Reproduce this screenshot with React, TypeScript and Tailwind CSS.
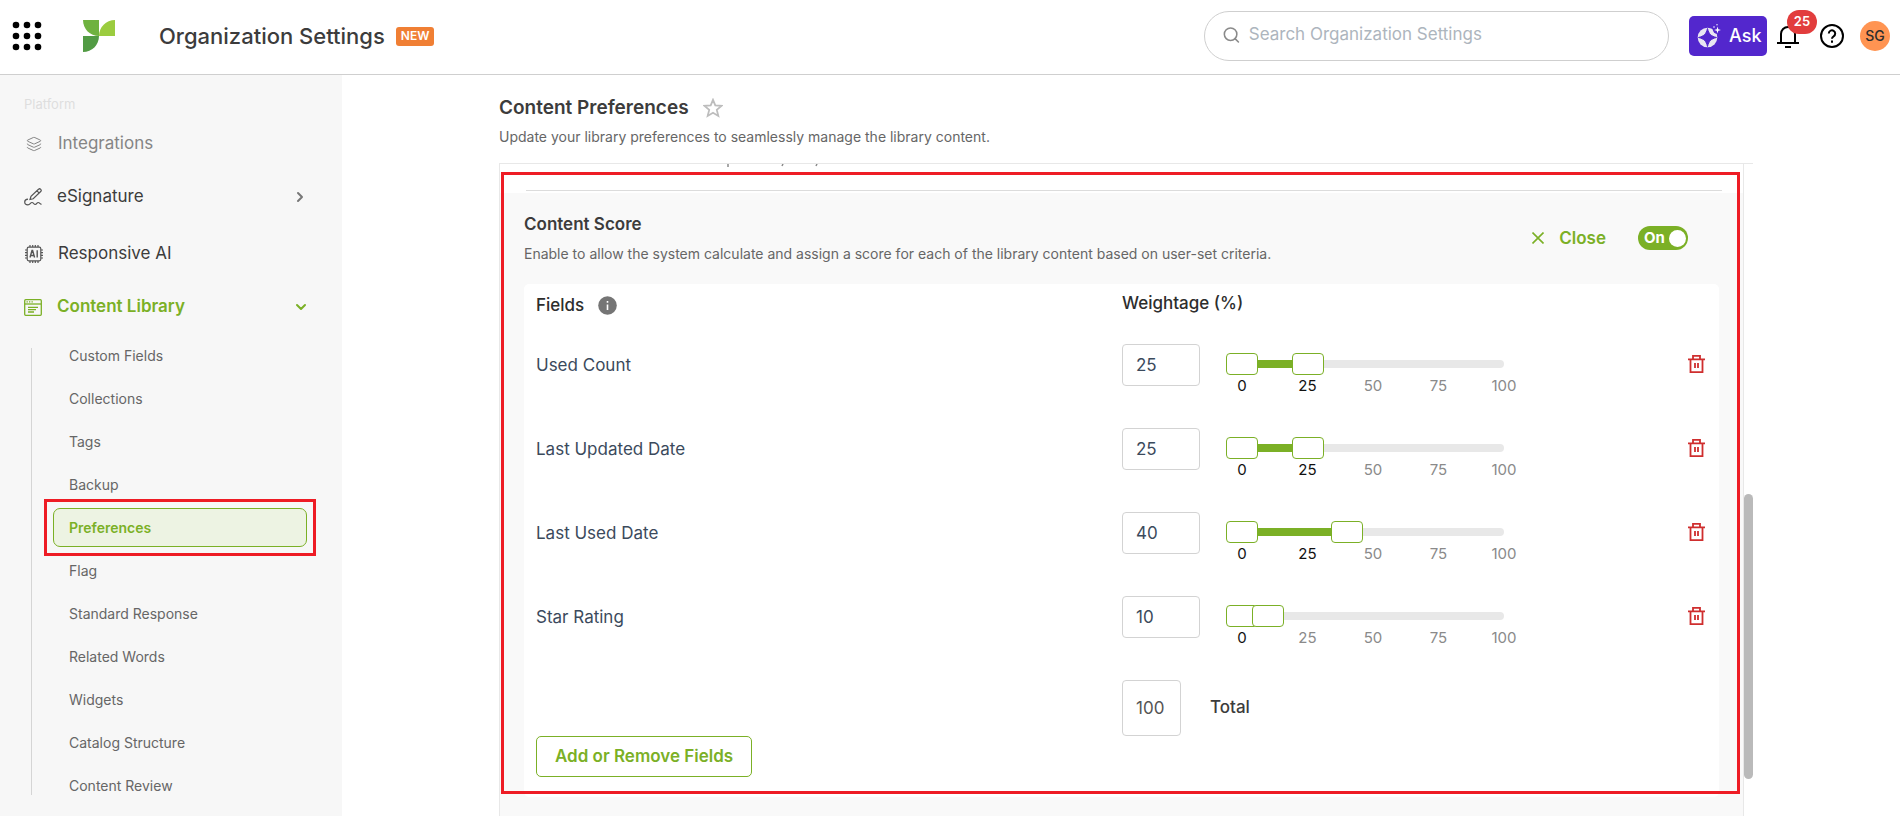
import { useState } from 'react';
import { Search, ChevronRight, ChevronDown, Layers } from 'lucide-react';

interface Field {
  id: string;
  label: string;
  weight: number;
}

const initialFields: Field[] = [
  { id: 'used-count', label: 'Used Count', weight: 25 },
  { id: 'last-updated', label: 'Last Updated Date', weight: 25 },
  { id: 'last-used', label: 'Last Used Date', weight: 40 },
  { id: 'star-rating', label: 'Star Rating', weight: 10 },
];

const libraryLinks = [
  'Custom Fields',
  'Collections',
  'Tags',
  'Backup',
  'Preferences',
  'Flag',
  'Standard Response',
  'Related Words',
  'Widgets',
  'Catalog Structure',
  'Content Review',
];

const ticks = [0, 25, 50, 75, 100];

function AppsIcon() {
  return (
    <svg width="30" height="30" viewBox="0 0 30 30" fill="#000">
      {[4, 15, 26].map((y) => [4, 15, 26].map((x) => <circle key={`${x}-${y}`} cx={x} cy={y} r="3.3" />))}
    </svg>
  );
}

function Logo() {
  return (
    <svg width="32" height="32" viewBox="0 0 32 32">
      <path d="M0 0h16v16C7 16 0 9 0 0z" fill="#6fb23f" />
      <path d="M32 0v16H16C16 7 23 0 32 0z" fill="#9bcc3f" />
      <path d="M0 16h16c0 9-7 16-16 16z" fill="#529b44" />
    </svg>
  );
}

function AskIcon() {
  return (
    <svg width="24" height="24" viewBox="0 0 24 24" fill="none">
      <circle cx="10.5" cy="13.5" r="9.8" fill="#e9e6f2" />
      <path
        d="M10.5 4.5c1.300 5.500 3.500 7.700 9 9-5.500 1.300-7.700 3.500-9 9-1.300-5.500-3.500-7.700-9-9 5.500-1.300 7.700-3.500 9-9z"
        fill="#5327cd"
        stroke="#5327cd"
      />
      <circle cx="20" cy="5.500" r="4.200" fill="#5327cd" />
      <path d="M20.500 2.500l.8 2.700 2.700.8-2.700.8-.8 2.700-.8-2.700L17 6l2.700-.8z" fill="#fff" />
      <circle cx="17" cy="3" r=".8" fill="#fff" />
      <circle cx="20" cy=".8" r=".7" fill="#fff" />
    </svg>
  );
}

function BellIcon() {
  return (
    <svg width="22" height="24" viewBox="0 0 22 24" fill="none" stroke="#000" strokeWidth="2">
      <path d="M0 19h22M4 19V10a7 7 0 0 1 14 0v9M8 23h6" />
    </svg>
  );
}

function HelpIcon() {
  return (
    <svg width="24" height="24" viewBox="0 0 24 24" fill="none" stroke="#000" strokeWidth="2">
      <circle cx="12" cy="12" r="11" />
      <path d="M8.800 9.500a3.200 3.200 0 1 1 4.800 2.800c-1 .6-1.600 1.200-1.600 2.400" />
      <path d="M12 16.500v2.200" />
    </svg>
  );
}

function SignIcon() {
  return (
    <svg width="18" height="18" viewBox="0 0 18 18" fill="none" stroke="#555" strokeWidth="1.200">
      <path d="M6 11.500l1-3.200 7.500-7a1.500 1.500 0 0 1 2.200 2.200L9.200 10.800zM13 2.800l2 2" />
      <path d="M4 11.200c-2 .2-3.300 1.200-3.300 2.800s1.500 2.800 3.300 2.800c2.200 0 2.200-2.300 4-2.300s1.500 2 3.200 2 1.500-2 3-2 1.600 1.600 3.300 1.900" />
    </svg>
  );
}

function ChipIcon() {
  return (
    <svg width="18" height="18" viewBox="0 0 18 18" fill="none" stroke="#555" strokeWidth="1.200">
      <rect x="2.200" y="2.200" width="13.600" height="13.600" rx="1.500" />
      <path d="M5 0v2M7.700 0v2M10.300 0v2M13 0v2M5 16v2M7.700 16v2M10.300 16v2M13 16v2M0 5h2M0 7.700h2M0 10.300h2M0 13h2M16 5h2M16 7.700h2M16 10.300h2M16 13h2" />
      <path d="M5 12.500l2-7h.6l2 7M5.700 10.500h3.200M12.200 5.300v7.200" strokeWidth="1.400" />
    </svg>
  );
}

function LibraryIcon() {
  return (
    <svg width="18" height="17" viewBox="0 0 18 17" fill="none" stroke="#7bb026" strokeWidth="1.300">
      <rect x=".7" y=".7" width="16.600" height="15.600" rx="1" />
      <path d="M1 5h16" />
      <path d="M2.500 2.900h1.300M5 2.900h1.300M7.500 2.900h1.300" />
      <path d="M4 8.300h10M4 10.700h8M4 13h6" />
    </svg>
  );
}

function StarIcon() {
  return (
    <svg width="20" height="20" viewBox="0 0 20 20" fill="none" stroke="#bdbdbd" strokeWidth="1.800">
      <path d="M10 1.800l2.300 5.600 6.200.5-4.700 4 1.500 6L10 14.700l-5.300 3.200 1.500-6-4.700-4 6.200-.5z" />
    </svg>
  );
}

function InfoIcon() {
  return (
    <svg width="19" height="19" viewBox="0 0 19 19">
      <circle cx="9.500" cy="9.500" r="9.300" fill="#757575" />
      <path d="M9.500 8.500v5.500M9.500 5v1.800" stroke="#fff" strokeWidth="1.600" />
    </svg>
  );
}

function CloseIcon() {
  return (
    <svg width="12" height="12" viewBox="0 0 12 12" fill="none" stroke="#7bb026" strokeWidth="1.600">
      <path d="M.5.5l11 11M11.500.5l-11 11" />
    </svg>
  );
}

function TrashIcon() {
  return (
    <svg width="17" height="18" viewBox="0 0 17 18" fill="none" stroke="#cf2e2e" strokeWidth="1.800">
      <path d="M0 4.300h17M5 4V.9h7V4M2.500 4.500v12.600h12V4.500M7 8v5M10 8v5" />
    </svg>
  );
}

function Header() {
  return (
    <header className="flex h-[75px] shrink-0 items-center border-b border-[#cfcfcf] bg-white pr-[10px] pb-[2px] pl-3">
      <button aria-label="Apps" className="mr-[41px]">
        <AppsIcon />
      </button>
      <a href="#home" aria-label="Home" className="mr-11">
        <Logo />
      </a>
      <h1 className="text-[22px] font-medium text-[#3c3c3c]">Organization Settings</h1>
      <span className="ml-[11px] flex h-[19px] items-center rounded-[3px] bg-[#f07f34] px-[5px] text-xs font-semibold text-white">
        NEW
      </span>
      <label className="ml-auto flex h-[50px] w-[465px] items-center gap-2 rounded-full border border-[#cfcfcf] px-[17px] pb-[3px]">
        <Search size={20} strokeWidth={2} className="text-[#8a8a8a]" />
        <input
          type="search"
          aria-label="Search Organization Settings"
          placeholder="Search Organization Settings"
          className="w-full bg-transparent text-[17px] outline-none placeholder:text-[#adb5bd]"
        />
      </label>
      <button className="ml-5 flex h-10 w-[78px] items-center gap-2 rounded-[5px] bg-[#5327cd] pl-2 text-lg font-medium text-white">
        <AskIcon />
        Ask
      </button>
      <button aria-label="Notifications" className="relative ml-[10px]">
        <BellIcon />
        <span className="absolute -top-[14px] left-[10px] flex h-6 w-[30px] items-center justify-center rounded-full bg-[#e23d3d] text-[13px] font-semibold text-white">
          25
        </span>
      </button>
      <button aria-label="Help" className="ml-[21px]">
        <HelpIcon />
      </button>
      <button className="ml-4 size-[30px] rounded-full bg-[#ff9452] text-sm font-medium text-[#2d2d2d]">SG</button>
    </header>
  );
}

function Sidebar() {
  return (
    <nav className="w-[342px] shrink-0 bg-[#f7f7f7] text-[17px] text-[#3c3c3c]">
      <p className="mt-[21px] pl-6 text-[13px] leading-4 text-[#dedede]">Platform</p>
      <a href="#integrations" className="mt-5 flex h-6 items-center pl-[26px] text-[#858585]">
        <Layers size={16} strokeWidth={1.500} className="mr-4" />
        Integrations
      </a>
      <a href="#esignature" className="mt-[29px] flex h-6 items-center pr-[34px] pl-6">
        <span className="mr-[15px]">
          <SignIcon />
        </span>
        eSignature
        <ChevronRight size={16} strokeWidth={3} className="ml-auto text-[#777]" />
      </a>
      <a href="#responsive-ai" className="mt-[33px] flex h-6 items-center pl-[25px]">
        <span className="mr-[15px]">
          <ChipIcon />
        </span>
        Responsive AI
      </a>
      <a href="#content-library" className="mt-[29px] flex h-6 items-center pr-[33px] pl-6 font-semibold text-[#7bb026]">
        <span className="mr-[15px]">
          <LibraryIcon />
        </span>
        Content Library
        <ChevronDown size={16} strokeWidth={3} className="ml-auto" />
      </a>
      <div className="mt-[29px] ml-[31px] flex h-[447px] border-l border-[#d5d5d5] pr-[26px] pl-3 text-sm text-[#666]">
        <ul className="-mt-[14px] flex flex-1 flex-col">
          {libraryLinks.map((link) =>
            link === 'Preferences' ? (
              <li key={link} className="-my-[7px] h-[57px] shrink-0 border-3 border-[#ee1c25] p-[6px]">
                <a
                  href="#preferences"
                  aria-current="page"
                  className="flex h-[39px] items-center rounded-[7px] border border-[#7bb026] bg-[#edf3e3] px-[15px] font-semibold text-[#7bb026]"
                >
                  {link}
                </a>
              </li>
            ) : (
              <li key={link} className="flex h-[43px] shrink-0 items-center pl-[25px]">
                <a href="#library">{link}</a>
              </li>
            ),
          )}
        </ul>
      </div>
    </nav>
  );
}

function WeightSlider({ value }: { value: number }) {
  return (
    <div className="ml-[26px] w-[278px] pt-[9px]">
      <div className="relative flex h-[22px] items-center">
        <div className="h-2 w-full rounded-r-full bg-[#e8e8e8]" />
        <div className="absolute inset-y-0 right-0 left-4">
          <div className="absolute top-[7px] left-0 h-2 bg-[#7bb026]" style={{ width: `${value}%` }} />
          {[0, value].map((stop, i) => (
            <span
              key={i}
              className="absolute top-0 h-[22px] w-8 -translate-x-1/2 rounded-[4px] border border-[#7bb026] bg-white"
              style={{ left: `${stop}%` }}
            />
          ))}
        </div>
      </div>
      <div className="-mr-4 flex justify-between">
        {ticks.map((tick) => (
          <span key={tick} className={`w-8 text-center text-[15px] leading-[22px] ${tick <= value ? 'text-[#111]' : 'text-[#8a8a8a]'}`}>
            {tick}
          </span>
        ))}
      </div>
    </div>
  );
}

function ContentScore() {
  const [fields, setFields] = useState(initialFields);
  const [enabled, setEnabled] = useState(true);
  const total = fields.reduce((sum, f) => sum + f.weight, 0);

  const setWeight = (id: string, weight: number) =>
    setFields(fields.map((f) => (f.id === id ? { ...f, weight } : f)));

  return (
    <section className="px-6">
      <div className="flex items-start justify-between pt-[19px]">
        <div>
          <h3 className="text-[17px] leading-6 font-semibold text-[#3c3c3c]">Content Score</h3>
          <p className="mt-2 text-sm leading-5 text-[#666]">
            Enable to allow the system calculate and assign a score for each of the library content based on user-set criteria.
          </p>
        </div>
        <div className="mt-[14px] mr-[31px] flex items-center">
          <button className="flex items-center gap-[15px] text-[17px] leading-6 font-semibold text-[#7bb026]">
            <CloseIcon />
            Close
          </button>
          <label className="ml-8 flex h-6 w-[50px] items-center justify-between rounded-full bg-[#7bb026] pr-[2px] pl-[6px] text-[15px] font-bold text-white">
            <input type="checkbox" checked={enabled} onChange={() => setEnabled(!enabled)} className="sr-only" />
            {enabled ? 'On' : 'Off'}
            <span className="size-[17px] rounded-full bg-white" />
          </label>
        </div>
      </div>
      <div className="mt-5 rounded-[5px] bg-white px-3 pb-5">
        <table className="w-full table-fixed text-left">
          <thead>
            <tr className="h-[60px] align-top text-[17px] text-[#2d2d2d]">
              <th className="w-[586px] pt-[9px] font-medium">
                <span className="flex items-center gap-[14px]">
                  Fields <InfoIcon />
                </span>
              </th>
              <th className="pt-[7px] font-medium">Weightage (%)</th>
              <th className="w-[60px]" aria-label="Actions" />
            </tr>
          </thead>
          <tbody>
            {fields.map((field) => (
              <tr key={field.id} className="h-[84px] align-top">
                <td>
                  <label htmlFor={field.id} className="text-[17px] leading-[42px] text-[#3b4a5c]">
                    {field.label}
                  </label>
                </td>
                <td>
                  <div className="flex">
                    <input
                      id={field.id}
                      value={field.weight}
                      onChange={(e) => setWeight(field.id, Number(e.target.value))}
                      className="h-[42px] w-[78px] rounded-[4px] border border-[#d3d3d3] px-[13px] text-[17px] text-[#3b4a5c]"
                    />
                    <WeightSlider value={field.weight} />
                  </div>
                </td>
                <td>
                  <button
                    aria-label={`Remove ${field.label}`}
                    onClick={() => setFields(fields.filter((f) => f.id !== field.id))}
                    className="mt-[11px] ml-[41px]"
                  >
                    <TrashIcon />
                  </button>
                </td>
              </tr>
            ))}
            <tr className="h-14 align-top">
              <td />
              <td>
                <div className="flex items-center text-[17px]">
                  <input
                    id="total"
                    readOnly
                    value={total}
                    className="h-14 w-[59px] rounded-[4px] border border-[#d3d3d3] px-[13px] text-[#555]"
                  />
                  <label htmlFor="total" className="ml-[29px] font-medium text-[#3c3c3c]">
                    Total
                  </label>
                </div>
              </td>
              <td />
            </tr>
          </tbody>
        </table>
        <button className="h-[41px] rounded-[5px] border border-[#7bb026] px-[18px] text-[17px] font-semibold text-[#7bb026]">
          Add or Remove Fields
        </button>
      </div>
    </section>
  );
}

export default function App() {
  return (
    <div className="flex h-screen flex-col overflow-hidden bg-white font-['Inter',sans-serif]">
      <Header />
      <div className="flex min-h-0 flex-1">
        <Sidebar />
        <main className="flex min-w-0 flex-1 flex-col pr-[147px] pl-[157px]">
          <div className="mt-[21px] flex items-center gap-[14px]">
            <h2 className="text-[19px] leading-6 font-semibold text-[#3c3c3c]">Content Preferences</h2>
            <button aria-label="Add to favourites">
              <StarIcon />
            </button>
          </div>
          <p className="mt-[7px] text-sm leading-5 text-[#666]">
            Update your library preferences to seamlessly manage the library content.
          </p>
          <div className="mt-4 flex min-h-0 flex-1 border-t border-[#e8e8e8]">
            <div className="relative min-w-0 flex-1 border-x border-[#e8e8e8]">
              <div className="h-[29px] pr-[21px] pl-[26px]">
                {/* tail of the setting scrolled out above */}
                <svg width="400" height="26" viewBox="0 0 400 26" stroke="#8a8a8a" strokeWidth="1.500" className="block">
                  <path d="M202 0v3M257 0l-1 2M291 0l-1 2" />
                </svg>
                <hr className="border-[#dcdcdc]" />
              </div>
              <div className="h-full bg-[#f9f9f9]">
                <ContentScore />
              </div>
              <div className="pointer-events-none absolute top-2 right-[3px] left-px h-[622px] border-3 border-[#ee1c25]" />
            </div>
            <div className="w-[9px] pt-[330px]">
              <div className="h-[285px] rounded-full bg-[#bababa]" />
            </div>
          </div>
        </main>
      </div>
    </div>
  );
}
